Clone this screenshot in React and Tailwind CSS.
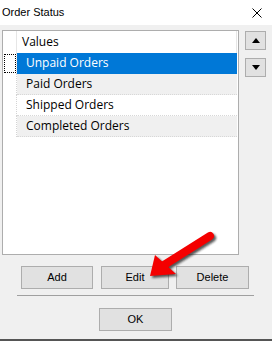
import React from "react";

const rows = [
  { label: "Unpaid Orders", selected: true },
  { label: "Paid Orders", alt: true },
  { label: "Shipped Orders" },
  { label: "Completed Orders", alt: true },
];

function SideButton({ up }) {
  return (
    <button className="w-[21px] h-[19px] bg-[#e1e1e1] border border-[#adadad] flex items-center justify-center">
      <svg width="8" height="5" viewBox="0 0 8 5">
        {up ? (
          <polygon points="4,0 8,5 0,5" fill="#000" />
        ) : (
          <polygon points="0,0 8,0 4,5" fill="#000" />
        )}
      </svg>
    </button>
  );
}

function DlgButton({ children, width, className = "" }) {
  return (
    <button
      className={`h-[23px] bg-[#e1e1e1] border border-[#adadad] text-[11px] text-black flex items-center justify-center ${width} ${className}`}
    >
      {children}
    </button>
  );
}

function Arrow() {
  return (
    <svg
      className="absolute left-[140px] top-[222px]"
      width="80"
      height="62"
      viewBox="0 0 80 62"
    >
      <defs>
        <filter id="sh" x="-20%" y="-20%" width="140%" height="140%">
          <feGaussianBlur stdDeviation="1.2" />
        </filter>
      </defs>
      <g transform="translate(2,2)" filter="url(#sh)" opacity="0.75">
        <line x1="24" y1="43" x2="70" y2="14" stroke="#222" strokeWidth="8" strokeLinecap="round" />
        <polygon points="10,54 15,33 36,52" fill="#222" />
      </g>
      <line x1="24" y1="43" x2="70" y2="14" stroke="#f40000" strokeWidth="8" strokeLinecap="round" />
      <polygon points="10,54 15,33 36,52" fill="#f40000" />
    </svg>
  );
}

export default function App() {
  return (
    <div className="relative w-[272px] h-[341px] bg-[#f0f0f0] overflow-hidden font-['Liberation_Sans',sans-serif]">
      <div className="h-[25px] bg-white flex items-center justify-between pl-[2px] pr-[10px]">
        <span className="text-[11px] text-black">Order Status</span>
        <svg width="10" height="10" viewBox="0 0 10 10">
          <path d="M0.5 0.5 L9.5 9.5 M9.5 0.5 L0.5 9.5" stroke="#000" strokeWidth="1" />
        </svg>
      </div>

      <div className="flex pt-[5px] pl-[2px]">
        <div className="w-[237px] h-[225px] border border-[#adadad] bg-white font-['Open_Sans',sans-serif] text-[12px]">
          <div className="flex h-[22px]">
            <div className="w-[14px] border-r border-[#e6e6e6]" />
            <div className="flex-1 flex items-center pl-[5px] text-black border-r border-[#e6e6e6] mr-[1px]">
              Values
            </div>
          </div>
          {rows.map((r) => (
            <div key={r.label} className="flex h-[21px]">
              <div className="w-[14px] border-r border-dotted border-[#d4d4d4] flex items-stretch pl-[1px] py-[1px]">
                {r.selected && <div className="w-[12px] border border-dotted border-black" />}
              </div>
              <div
                className={`flex-1 mr-[1px] flex items-center pl-[9px] border-b border-dotted ${
                  r.selected
                    ? "bg-[#0078d7] text-white border-[#0078d7]"
                    : r.alt
                    ? "bg-[#f0f0f0] text-black border-[#d8d8d8]"
                    : "bg-white text-black border-[#d8d8d8]"
                }`}
              >
                {r.label}
              </div>
            </div>
          ))}
        </div>
        <div className="flex flex-col gap-[8px] ml-[6px] pt-[1px]">
          <SideButton up />
          <SideButton />
        </div>
      </div>

      <div className="flex mt-[11px] pl-[21px]">
        <DlgButton width="w-[72px]">Add</DlgButton>
        <DlgButton width="w-[68px]" className="ml-[8px]">Edit</DlgButton>
        <DlgButton width="w-[73px]" className="ml-[7px]">Delete</DlgButton>
      </div>

      <div className="mt-[6px] ml-[17px] w-[237px] h-px bg-[#a0a0a0]" />

      <div className="mt-[12px] pl-[99px]">
        <DlgButton width="w-[73px]">OK</DlgButton>
      </div>

      <div className="absolute left-0 right-0 bottom-0 h-[2px] bg-[#555]" />

      <Arrow />
    </div>
  );
}
